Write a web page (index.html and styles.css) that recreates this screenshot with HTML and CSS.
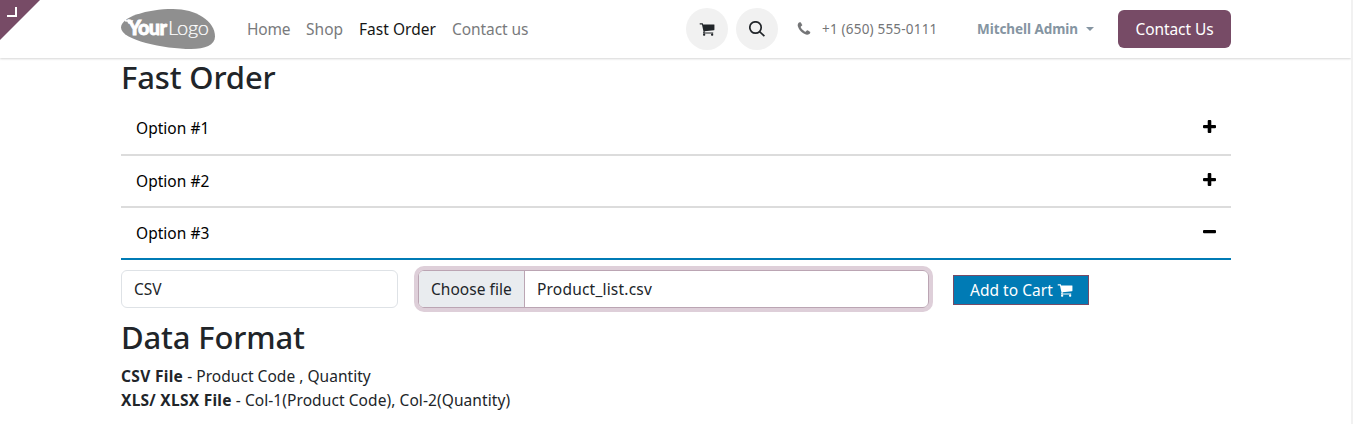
FILE: index.html
```html
<!DOCTYPE html>
<html lang="en">
<head>
<meta charset="utf-8">
<title>Fast Order</title>
<link rel="stylesheet" href="styles.css">
</head>
<body>
<svg class="defs" width="0" height="0">
  <symbol id="cart" viewBox="0 0 1792 1792"><path d="M704 1536q0 52-38 90t-90 38-90-38-38-90 38-90 90-38 90 38 38 90zm896 0q0 52-38 90t-90 38-90-38-38-90 38-90 90-38 90 38 38 90zm128-1088v512q0 24-16.500 42.500t-40.500 21.500l-1044 122q13 60 13 70 0 16-24 64h920q26 0 45 19t19 45-19 45-45 19h-1024q-26 0-45-19t-19-45q0-11 8-31.500t16-36 21.500-40 15.500-29.500l-177-823h-204q-26 0-45-19t-19-45 19-45 45-19h256q16 0 28.500 6.500t19.500 15.500 13 24.500 8 26 5.500 29.500 4.500 26h1201q26 0 45 19t19 45z"/></symbol>
  <symbol id="plus" viewBox="0 0 13 13"><path d="M5.700 0h1.600q1 0 1 1v3.900h3.700q1 0 1 1v1.400q0 1-1 1h-3.700v3.700q0 1-1 1h-1.600q-1 0-1-1v-3.700h-3.700q-1 0-1-1v-1.400q0-1 1-1h3.700v-3.900q0-1 1-1z"/></symbol>
  <symbol id="minus" viewBox="0 0 13 13"><path d="M1 4.900h11q1 0 1 1v1.400q0 1-1 1h-11q-1 0-1-1v-1.400q0-1 1-1z"/></symbol>
</svg>
<div class="page">
  <header class="header">
    <svg class="logo" width="94" height="40" viewBox="0 0 94 40">
      <path d="M0 18.500C0 8 26 0 52 0C75 0 94 12 94 27.500C94 36 84 40 70 40C43 40 0 31 0 18.500Z" fill="#8f8f8f"/>
      <path d="M4 10.500l2 .8 2-1 1.500 1.500 3-.8-2.500 4-3-.5-.5-1.700-2.500-.3z" fill="#fff"/>
      <text class="logo-your" x="7" y="25.500" textLength="39">Your</text>
      <text class="logo-name" x="47" y="25.500" textLength="41">Logo</text>
    </svg>
    <nav class="nav">
      <a class="home">Home</a><a class="shop">Shop</a><a class="fast active">Fast Order</a><a class="contact">Contact us</a>
    </nav>
    <div class="tools">
      <span class="round"><svg width="16" height="16" fill="#212529"><use href="#cart"/></svg></span>
      <span class="round"><svg width="16" height="16" viewBox="0 0 16 16" fill="none" stroke="#212529" stroke-width="1.700"><circle cx="6.500" cy="6.500" r="5.700"/><path d="M10.600 10.600l4.800 4.600"/></svg></span>
    </div>
    <div class="phone">
      <svg width="16" height="16" viewBox="0 0 1792 1792"><path d="M1600 1240q0 27-10 70.500t-21 68.500q-21 50-122 106-94 51-186 51-27 0-53-3.500t-57.500-12.500-47-14.500-55.500-20.500-49-18q-98-35-175-83-127-79-264-216t-216-264q-48-77-83-175-3-9-18-49t-20.500-55.500-14.500-47-12.500-57.500-3.500-53q0-92 51-186 56-101 106-122 25-11 68.500-21t70.500-10q14 0 21 3 18 6 53 76 11 19 30 54t35 63.500 31 53.500q3 4 17.500 25t21.500 35.500 7 28.500q0 20-28.500 50t-62 55-62 53-28.500 46q0 9 5 22.500t8.500 20.500 14 24 11.500 19q76 137 174 235t235 174q2 1 19 11.500t24 14 20.500 8.500 22.500 5q18 0 46-28.500t53-62 55-62 50-28.500q14 0 28.500 7t35.500 21.500 25 17.500q25 15 53.500 31t63.500 35 54 30q70 35 76 53 3 7 3 21z"/></svg>
      <span>+1 (650) 555-0111</span>
    </div>
    <div class="user"><span>Mitchell Admin</span><i class="caret"></i></div>
    <a class="cta"><span>Contact Us</span></a>
  </header>
  <main class="main">
    <h1 class="title">Fast Order</h1>
    <div class="options">
      <div class="option first"><span>Option #1</span><svg width="13" height="13"><use href="#plus"/></svg></div>
      <div class="option"><span>Option #2</span><svg width="13" height="13"><use href="#plus"/></svg></div>
      <div class="option open"><span>Option #3</span><svg width="13" height="13"><use href="#minus"/></svg></div>
    </div>
    <div class="form">
      <div class="select">CSV</div>
      <div class="file"><span class="choose">Choose file</span><span class="filename">Product_list.csv</span></div>
      <button class="add"><span>Add to Cart</span><svg width="16" height="16" fill="#fff"><use href="#cart"/></svg></button>
    </div>
    <h2 class="title format">Data Format</h2>
    <p class="line csv"><b>CSV File</b> - <span>Product Code , Quantity</span></p>
    <p class="line xls"><b>XLS/ XLSX File</b> - <span>Col-1(Product Code), Col-2(Quantity)</span></p>
  </main>
  <div class="corner"><svg width="40" height="40"><path d="M0 0h40L0 40z" fill="#774b66"/><path d="M7 16h9V7" fill="none" stroke="#fff" stroke-width="2"/></svg></div>
</div>
</body>
</html>
```
FILE: styles.css
```css
* { box-sizing: border-box; }
body { margin: 0; background: #fff; color: #212529; font: 15.5px/24px "Noto Sans", sans-serif; letter-spacing: 0.03px; }
.defs { display: block; height: 0; }
.page { position: relative; height: 424px; overflow: hidden; border-right: 2px solid #f1f1f1; }
.corner { position: absolute; top: 0; left: 0; }
.header { height: 58px; padding-left: 121px; display: flex; align-items: center; box-shadow: 0 1px 2px rgba(0,0,0,.16); white-space: nowrap; }
.logo { flex: none; }
.logo-your { font: 900 20px Lato, sans-serif; fill: #fff; stroke: #fff; stroke-width: .8; }
.logo-name { font: 300 20px Lato, sans-serif; fill: #fff; stroke: #fff; stroke-width: .2; }
.nav { display: flex; margin-left: 32px; width: 439px; color: #797a7c; }
.home { width: 59px; letter-spacing: -0.2px; }
.shop { width: 53px; }
.fast { width: 93px; }
.contact { letter-spacing: -0.08px; }
.active { color: #161616; }
.tools { display: flex; gap: 8px; width: 92px; }
.round { width: 42px; height: 42px; border-radius: 50%; background: #f1f1f1; display: flex; align-items: center; justify-content: center; }
.phone { display: flex; align-items: center; margin-left: 18px; width: 181px; color: #747577; fill: #747577; font-size: 13.5px; letter-spacing: 0.2px; }
.phone span { margin-left: 10px; }
.user { display: flex; align-items: center; width: 141px; color: #8595a2; font-size: 13.5px; font-weight: 700; letter-spacing: -0.06px; }
.user span { width: 109px; }
.caret { border: 4px solid transparent; border-top-color: #8595a2; border-bottom: 0; }
.cta { width: 113px; height: 38px; border-radius: 6px; background: #774b66; color: #fff; display: flex; align-items: center; justify-content: center; letter-spacing: -0.08px; }
.main { width: 1231px; padding-left: 121px; }
.title { margin: 0; height: 43px; font-size: 31px; line-height: 38px; font-weight: 550; letter-spacing: -0.15px; }
.option { height: 52px; padding: 0 15px; display: flex; align-items: center; justify-content: space-between; border-bottom: 2px solid #dcdcdc; color: #000; }
.option svg { margin-bottom: 3px; }
.first { height: 55px; }
.open { border-color: #007bb5; }
.form { display: flex; align-items: flex-start; padding-top: 10px; height: 58px; }
.select { width: 277px; height: 38px; border: 1px solid #dee2e6; border-radius: 6px; padding: 6px 12px; }
.file { width: 511px; height: 38px; margin-left: 20px; display: flex; border: 1px solid #bba5b3; border-radius: 6px; box-shadow: 0 0 0 4px #decfd9; }
.choose { width: 106px; padding: 6px 0 6px 12px; background: #e9ecef; border-right: 1px solid #bba5b3; border-radius: 5px 0 0 5px; white-space: nowrap; }
.filename { padding: 6px 12px; letter-spacing: 0.2px; }
.add { width: 136px; height: 30px; margin: 5px 0 0 24px; padding: 0 15px 0 16px; display: flex; align-items: center; justify-content: space-between; border: 1px solid #774b66; background: #007bb5; color: #fff; font: inherit; letter-spacing: 0.03px; white-space: nowrap; }
.format { height: 46px; }
.line { margin: 0; }
.csv b { letter-spacing: 0.32px; }
.xls b { letter-spacing: 0.26px; }
.xls span { letter-spacing: 0.08px; }
```
